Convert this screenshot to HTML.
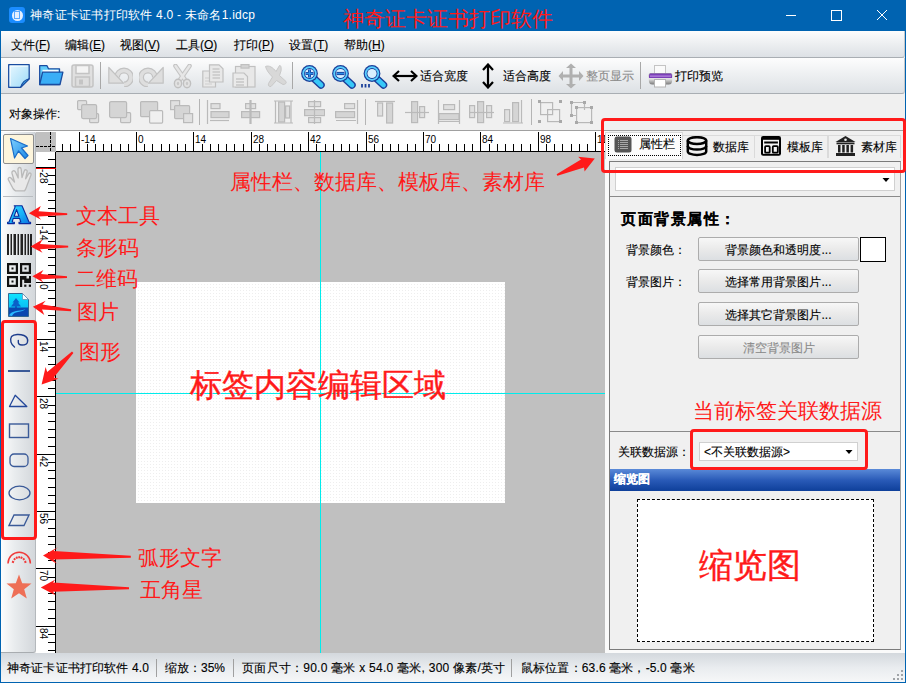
<!DOCTYPE html>
<html><head><meta charset="utf-8">
<style>
*{box-sizing:border-box}
html,body{margin:0;padding:0}
body{width:906px;height:683px;overflow:hidden;position:relative;background:#f0f0f0;font-family:"Liberation Sans",sans-serif;font-size:12px;color:#000}
.a{position:absolute}
.t{position:absolute;white-space:nowrap;line-height:14px;-webkit-text-stroke:0.12px currentColor}
.red{position:absolute;white-space:nowrap;color:#ff1a1a;font-size:21px;line-height:24px;font-weight:300}
.bar{background:linear-gradient(#fdfdfd,#eef0f2 45%,#dde1e5);border-bottom:1px solid #a9aeb3}
.sep{position:absolute;width:1px;background:#a0a0a0}
.btn{position:absolute;left:698px;width:161px;height:24px;border:1px solid #acacac;border-radius:2px;background:linear-gradient(#f7f7f7,#eaeaea 50%,#dcdfe2);text-align:center;line-height:24px;-webkit-text-stroke:0.12px currentColor}
</style></head><body>

<!-- title bar -->
<div class="a" style="left:0;top:0;width:906px;height:31px;background:#0063b1"></div>
<div class="a" style="left:0;top:0;width:1px;height:683px;background:#0063b1"></div>
<div class="a" style="left:905px;top:0;width:1px;height:683px;background:#0063b1"></div>
<div class="a" style="left:0;top:682px;width:906px;height:1px;background:#0063b1"></div>
<div class="a" style="left:9px;top:7px;width:16px;height:16px;border-radius:3px;background:#1a8cff"></div>
<div class="a" style="left:11.5px;top:9.5px;width:11px;height:11px;border-radius:50%;background:#e6f0ff"></div>
<div class="a" style="left:14px;top:11px;width:6px;height:8px;border:1px solid #5aa8ff"></div>
<div class="t" style="left:30px;top:8px;color:#fff;letter-spacing:0.25px;-webkit-text-stroke:0">神奇证卡证书打印软件 4.0 - 未命名1.idcp</div>
<svg class="a" style="left:780px;top:0" width="120" height="31" stroke="#fff" stroke-width="1" fill="none" shape-rendering="crispEdges">
<line x1="6" y1="15.5" x2="16" y2="15.5"/>
<rect x="51.5" y="10.5" width="10" height="10"/>
<path d="M97 10 L107 20 M107 10 L97 20" shape-rendering="geometricPrecision"/>
</svg>

<!-- menu bar -->
<div class="a bar" style="left:1px;top:31px;width:904px;height:27px;border-right:1px solid #c4c8cc;border-radius:0 0 3px 0"></div>
<div class="t" style="left:11px;top:38px">文件(<u>F</u>)</div>
<div class="t" style="left:65px;top:38px">编辑(<u>E</u>)</div>
<div class="t" style="left:120px;top:38px">视图(<u>V</u>)</div>
<div class="t" style="left:176px;top:38px">工具(<u>O</u>)</div>
<div class="t" style="left:234px;top:38px">打印(<u>P</u>)</div>
<div class="t" style="left:289px;top:38px">设置(<u>T</u>)</div>
<div class="t" style="left:344px;top:38px">帮助(<u>H</u>)</div>

<!-- toolbar -->
<div class="a bar" style="left:1px;top:58px;width:904px;height:36px;border-right:1px solid #c4c8cc;border-radius:0 0 3px 0"></div>

<!-- new -->
<svg class="a" style="left:8px;top:64px" width="23" height="24">
<defs><linearGradient id="gnew" x1="0" y1="0" x2="1" y2="1"><stop offset="0" stop-color="#e8f8ff"/><stop offset="1" stop-color="#9cdaf8"/></linearGradient></defs>
<path d="M0.7 0.7 H21.2 V14.8 L12.6 23.3 H0.7 Z" fill="url(#gnew)" stroke="#1a4ca0" stroke-width="1.3" stroke-linejoin="round"/>
<path d="M2.2 2.2 V21.8 M2.2 2.2 H19.8" stroke="#fff" stroke-width="1" opacity="0.8"/>
<path d="M21.2 14.8 L12.6 23.3 C13.8 19.5 15.5 16.2 21.2 14.8 Z" fill="#40b8f4" stroke="#1a4ca0" stroke-width="1.1" stroke-linejoin="round"/>
</svg>
<!-- open -->
<svg class="a" style="left:39px;top:65px" width="25" height="21">
<path d="M0.7 0.7 H8 L9.5 3.8 H20.5 V19.5 H0.7 Z" fill="#62ccfa" stroke="#1a4ca0" stroke-width="1.3" stroke-linejoin="round"/>
<rect x="3.5" y="4.8" width="16" height="2.5" fill="#f4fbff"/>
<path d="M0.7 19.5 L3.6 7.2 H23.9 L21 19.5 Z" fill="#3aaef6" stroke="#1a4ca0" stroke-width="1.3" stroke-linejoin="round"/>
</svg>
<!-- save (disabled) -->
<svg class="a" style="left:71px;top:64px" width="23" height="24" fill="none" stroke="#c4c4c4" stroke-width="1.5">
<rect x="1" y="1" width="21" height="22" rx="2" fill="#e0e0e0"/>
<rect x="5" y="1.5" width="13" height="8" fill="#f4f4f4"/>
<rect x="4.5" y="13" width="14" height="9.5" fill="#dedede"/>
<rect x="8" y="15.5" width="4" height="5" fill="#c4c4c4" stroke="none"/>
</svg>
<div class="sep" style="left:100px;top:62px;height:27px;background:#a8a8a8"></div>
<!-- undo -->
<svg class="a" style="left:108px;top:66px" width="25" height="21"><path d="M9 11.5 A7 7 0 1 1 16 18.5" fill="none" stroke="#c2c2c2" stroke-width="6"/>
<path d="M9 11.5 A7 7 0 1 1 16 18.5" fill="none" stroke="#dedede" stroke-width="3.6"/>
<path d="M0.8 1.5 V17.2 H15.5 Z" fill="#dedede" stroke="#c2c2c2" stroke-width="1.2" stroke-linejoin="round"/></svg>
<!-- redo -->
<svg class="a" style="left:139px;top:66px" width="25" height="21"><g transform="translate(25,0) scale(-1,1)"><path d="M9 11.5 A7 7 0 1 1 16 18.5" fill="none" stroke="#c2c2c2" stroke-width="6"/>
<path d="M9 11.5 A7 7 0 1 1 16 18.5" fill="none" stroke="#dedede" stroke-width="3.6"/>
<path d="M0.8 1.5 V17.2 H15.5 Z" fill="#dedede" stroke="#c2c2c2" stroke-width="1.2" stroke-linejoin="round"/></g></svg>
<!-- cut -->
<svg class="a" style="left:172px;top:64px" width="21" height="25" fill="none" stroke-linecap="round">
<path d="M3.5 2 L12.5 15 M17.5 2 L8.5 15" stroke="#c4c4c4" stroke-width="4.6"/>
<path d="M3.5 2 L12.5 15 M17.5 2 L8.5 15" stroke="#e6e6e6" stroke-width="2.4"/>
<ellipse cx="6" cy="19.5" rx="3.6" ry="4.2" fill="#e2e2e2" stroke="#c0c0c0" stroke-width="1.4"/>
<ellipse cx="15" cy="19.5" rx="3.6" ry="4.2" fill="#e2e2e2" stroke="#c0c0c0" stroke-width="1.4"/>
<ellipse cx="6" cy="19.5" rx="1.2" ry="1.8" fill="#c8c8c8"/>
<ellipse cx="15" cy="19.5" rx="1.2" ry="1.8" fill="#c8c8c8"/>
</svg>
<!-- copy -->
<svg class="a" style="left:202px;top:64px" width="22" height="24" fill="#e8e8e8" stroke="#c0c0c0" stroke-width="1.2">
<path d="M0.8 7 H10 L13.5 10.5 V23 H0.8 Z"/>
<path d="M3 14 H10 M3 17 H10 M3 20 H10" stroke="#cdcdcd" fill="none"/>
<path d="M7.5 0.8 H17 L21 4.8 V18 H7.5 Z"/>
<path d="M10.5 5 H17.5 M10.5 8 H18 M10.5 11 H18 M10.5 14 H18" stroke="#c8c8c8" fill="none" stroke-width="1.3"/>
</svg>
<!-- paste -->
<svg class="a" style="left:232px;top:64px" width="25" height="24" fill="#e8e8e8" stroke="#c0c0c0" stroke-width="1.2">
<rect x="3.5" y="2.5" width="19.5" height="20.5"/>
<rect x="9" y="0.6" width="8" height="3.5" fill="#d4d4d4"/>
<path d="M1 9 H12 L15.5 12.5 V23 H1 Z" fill="#eaeaea"/>
<path d="M4 15 H12 M4 18 H12 M4 21 H12" fill="none" stroke="#c6c6c6" stroke-width="1.4"/>
</svg>
<!-- delete -->
<svg class="a" style="left:264px;top:64px" width="24" height="25">
<path d="M1.5 2.5 C5 1 9 3.5 12 7.5 L15.5 1.5 C17 1.2 17.5 4 17 7 L15.5 11.5 L22 17.5 C22.8 19 21.5 20.5 19 20.5 L12.5 16.5 L7 22.5 C5 23 4 21.5 4.5 19.5 L8.5 13 C5.5 10 2.5 6.5 1.5 2.5 Z" fill="#d8d8d8" stroke="#c8c8c8" stroke-width="1"/>
</svg>
<div class="sep" style="left:292px;top:62px;height:27px;background:#a8a8a8"></div>
<!-- zoom in -->
<svg class="a" style="left:300px;top:64px" width="25" height="25">
<path d="M14.5 15 L21.0 21" stroke="#1a3f9a" stroke-width="7.5" stroke-linecap="round"/>
<path d="M14.5 15 L21.0 21" stroke="#38c8f8" stroke-width="4.8" stroke-linecap="round"/>
<circle cx="9.5" cy="9.5" r="8.4" fill="#1a3f9a"/>
<circle cx="9.5" cy="9.5" r="7.2" fill="#5ad0ff"/>
<circle cx="9.5" cy="9.5" r="5.4" fill="#1a3f9a"/>
<circle cx="9.5" cy="9.5" r="4.6" fill="#d8f0ff"/>
<path d="M5.5 9.5 H13.5 M9.5 5.5 V13.5" stroke="#1a3f9a" stroke-width="3"/><path d="M6 9.5 H13 M9.5 6 V13" stroke="#2a90e8" stroke-width="1.4"/>
</svg>
<!-- zoom out -->
<svg class="a" style="left:331px;top:64px" width="25" height="25">
<path d="M14.5 15 L21.0 21" stroke="#1a3f9a" stroke-width="7.5" stroke-linecap="round"/>
<path d="M14.5 15 L21.0 21" stroke="#38c8f8" stroke-width="4.8" stroke-linecap="round"/>
<circle cx="9.5" cy="9.5" r="8.4" fill="#1a3f9a"/>
<circle cx="9.5" cy="9.5" r="7.2" fill="#5ad0ff"/>
<circle cx="9.5" cy="9.5" r="5.4" fill="#1a3f9a"/>
<circle cx="9.5" cy="9.5" r="4.6" fill="#d8f0ff"/>
<path d="M5.5 9.5 H13.5" stroke="#1a3f9a" stroke-width="3.2"/><path d="M6 9.5 H13" stroke="#2a90e8" stroke-width="1.4"/>
</svg>
<!-- zoom fit -->
<svg class="a" style="left:361px;top:64px" width="27" height="25">
<path d="M16 15 L22.5 21" stroke="#1a3f9a" stroke-width="7.5" stroke-linecap="round"/>
<path d="M16 15 L22.5 21" stroke="#38c8f8" stroke-width="4.8" stroke-linecap="round"/>
<circle cx="11" cy="9.5" r="8.4" fill="#1a3f9a"/>
<circle cx="11" cy="9.5" r="7.2" fill="#5ad0ff"/>
<circle cx="11" cy="9.5" r="5.4" fill="#1a3f9a"/>
<circle cx="11" cy="9.5" r="4.6" fill="#d8f0ff"/>
<path d="M1 20 V23.5 M4.5 20 V23.5 M8 20 V23.5" stroke="#1a3f9a" stroke-width="1.8"/>
</svg>
<svg class="a" style="left:392px;top:70px" width="26" height="12">
<path d="M2 6 H24" stroke="#000" stroke-width="2.2"/>
<path d="M7 1 L1.5 6 L7 11 M19 1 L24.5 6 L19 11" fill="none" stroke="#000" stroke-width="2.2"/>
</svg>
<div class="t" style="left:420px;top:69px">适合宽度</div>
<svg class="a" style="left:482px;top:63px" width="12" height="26">
<path d="M6 2 V24" stroke="#000" stroke-width="2.2"/>
<path d="M1 7 L6 1.5 L11 7 M1 19 L6 24.5 L11 19" fill="none" stroke="#000" stroke-width="2.2"/>
</svg>
<div class="t" style="left:503px;top:69px">适合高度</div>
<svg class="a" style="left:558px;top:63px" width="26" height="26" fill="#b0b0b0">
<path d="M11.5 5 H14.5 V11.5 H21 V8 L25.5 13 L21 18 V14.5 H14.5 V21 H18 L13 25.5 L8 21 H11.5 V14.5 H5 V18 L0.5 13 L5 8 V11.5 H11.5 V5 H8 L13 0.5 L18 5 Z"/>
</svg>
<div class="t" style="left:586px;top:69px;color:#8c8c8c">整页显示</div>
<div class="sep" style="left:640px;top:62px;height:27px;background:#a8a8a8"></div>
<!-- printer -->
<svg class="a" style="left:648px;top:65px" width="25" height="23">
<defs><linearGradient id="gpr" x1="0" y1="0" x2="0" y2="1"><stop offset="0" stop-color="#9a9a9a"/><stop offset="0.5" stop-color="#e6e6e6"/><stop offset="1" stop-color="#7a7a7a"/></linearGradient></defs>
<rect x="6.5" y="0.5" width="11" height="9" fill="#fafafa" stroke="#c4c4c4"/>
<path d="M3 8 H22 Q24.5 8 24.5 11 L24 17 Q23.5 19.5 21 19.5 H4 Q1.5 19.5 1 17 L0.5 11 Q0.5 8 3 8 Z" fill="url(#gpr)"/>
<path d="M2 8.5 H23 Q24 9 24 11 V13 H1 V11 Q1 9 2 8.5 Z" fill="#7b3fb8"/>
<rect x="2" y="10.5" width="21" height="1.2" fill="#b88ae0"/>
<rect x="6.5" y="14.5" width="11" height="7.5" fill="#fff" stroke="#b4b4b4"/>
</svg>
<div class="t" style="left:675px;top:69px">打印预览</div>


<!-- object bar -->
<div class="a" style="left:1px;top:130px;width:904px;height:1px;background:#a0a0a0"></div>
<div class="t" style="left:9px;top:107px">对象操作:</div>

<svg class="a" style="left:77px;top:100px" width="25" height="24" stroke="#bababa" stroke-width="1.2">
<rect x="0.6" y="0.6" width="9" height="9" rx="1" fill="#e0e0e0"/>
<rect x="12.6" y="13.6" width="9" height="9" rx="1" fill="#e0e0e0"/>
<rect x="4.6" y="4.6" width="15" height="14" rx="1.5" fill="#d5d5d5"/>
</svg>
<svg class="a" style="left:108px;top:100px" width="25" height="24" stroke="#bababa" stroke-width="1.2">
<rect x="12.6" y="12.6" width="10" height="10" rx="1" fill="#e0e0e0"/>
<rect x="1.6" y="1.6" width="17" height="16" rx="1.5" fill="#d5d5d5"/>
</svg>
<svg class="a" style="left:139px;top:100px" width="25" height="24" stroke="#bababa" stroke-width="1.2">
<rect x="1.6" y="1.6" width="17" height="15" rx="1" fill="#d5d5d5"/>
<rect x="10.6" y="10.6" width="13" height="12.5" rx="1" fill="#f0f0f0"/>
</svg>
<svg class="a" style="left:170px;top:100px" width="25" height="24" stroke="#bababa" stroke-width="1.2">
<rect x="0.6" y="0.6" width="9" height="9" fill="#e0e0e0"/>
<rect x="4.6" y="5.6" width="15" height="13" rx="1" fill="#d5d5d5"/>
<rect x="13.6" y="13.6" width="9" height="9" fill="#e0e0e0"/>
</svg>
<div class="sep" style="left:199px;top:99px;height:26px;background:#b4b4b4"></div>
<svg class="a" style="left:206px;top:100px" width="25" height="24" stroke="#bababa" stroke-width="1.2">
<path d="M1.5 0 V24" />
<rect x="5" y="3.6" width="9" height="5" fill="#e0e0e0"/>
<rect x="5" y="11.6" width="18" height="6" fill="#d5d5d5"/>
<path d="M4 20.5 H23" />
</svg>
<svg class="a" style="left:240px;top:100px" width="22" height="24" stroke="#bababa" stroke-width="1.2">
<rect x="5.6" y="3.6" width="10" height="5" fill="#e0e0e0"/>
<rect x="1.6" y="11.6" width="18" height="6" fill="#d5d5d5"/>
<path d="M10.5 0 V24" stroke-width="2.2"/>
</svg>
<svg class="a" style="left:273px;top:100px" width="21" height="24" stroke="#bababa" stroke-width="1.2">
<path d="M1 1 H20 M1 23 H20 M2.5 1 V23 M18 1 V23" />
<rect x="5.6" y="2" width="6" height="20" fill="#d5d5d5"/>
<rect x="12.6" y="6" width="4" height="12" fill="#e0e0e0"/>
</svg>
<svg class="a" style="left:304px;top:100px" width="21" height="24" stroke="#bababa" stroke-width="1.2">
<rect x="4.6" y="1.6" width="12" height="5" fill="#e0e0e0"/>
<rect x="0.6" y="9.6" width="20" height="6" fill="#d5d5d5"/>
<rect x="4.6" y="17.6" width="12" height="5" fill="#e0e0e0"/>
<path d="M10.5 0 V24"/>
</svg>
<svg class="a" style="left:335px;top:100px" width="24" height="24" stroke="#bababa" stroke-width="1.2">
<rect x="9.6" y="3.6" width="10" height="5" fill="#e0e0e0"/>
<rect x="0.6" y="11.6" width="19" height="6" fill="#d5d5d5"/>
<path d="M22.5 0 V24 M1 20.5 H21"/>
</svg>
<div class="sep" style="left:365px;top:99px;height:26px;background:#b4b4b4"></div>
<svg class="a" style="left:375px;top:100px" width="20" height="24" stroke="#bababa" stroke-width="1.2">
<path d="M0 1.5 H20"/>
<rect x="2.6" y="3" width="5" height="13" fill="#e0e0e0"/>
<rect x="11.6" y="3" width="6" height="20" fill="#d5d5d5"/>
</svg>
<svg class="a" style="left:405px;top:100px" width="24" height="24" stroke="#bababa" stroke-width="1.2">
<rect x="6.6" y="1.6" width="6" height="21" fill="#d5d5d5"/>
<rect x="14.6" y="6.6" width="5" height="11" fill="#e0e0e0"/>
<path d="M0 12.5 H24"/>
</svg>
<svg class="a" style="left:437px;top:100px" width="24" height="24" stroke="#bababa" stroke-width="1.2">
<path d="M1.5 0 V24 M22.5 0 V24 M1 21.5 H23"/>
<rect x="6.6" y="4.6" width="11" height="5" fill="#e0e0e0"/>
<rect x="2" y="13.6" width="20" height="6" fill="#d5d5d5"/>
</svg>
<svg class="a" style="left:469px;top:100px" width="25" height="24" stroke="#bababa" stroke-width="1.2">
<rect x="0.6" y="5.6" width="5" height="12" fill="#e0e0e0"/>
<rect x="8.6" y="1.6" width="6" height="21" fill="#d5d5d5"/>
<rect x="17.6" y="5.6" width="5" height="12" fill="#e0e0e0"/>
<path d="M0 12.5 H25"/>
</svg>
<svg class="a" style="left:503px;top:100px" width="20" height="24" stroke="#bababa" stroke-width="1.2">
<rect x="1.6" y="9.6" width="5" height="12" fill="#e0e0e0"/>
<rect x="9.6" y="2.6" width="6" height="19" fill="#d5d5d5"/>
<path d="M0 23 H20 M18.5 0 V23"/>
</svg>
<div class="sep" style="left:531px;top:99px;height:26px;background:#b4b4b4"></div>
<svg class="a" style="left:538px;top:100px" width="26" height="24" fill="none" stroke="#b8b8b8" stroke-width="1.2">
<rect x="2.6" y="2.6" width="12" height="12"/>
<rect x="9.6" y="9.6" width="12" height="12"/>
<g fill="#a8a8a8" stroke="none"><rect x="0" y="0" width="3" height="3"/><rect x="21" y="0" width="3" height="3"/><rect x="0" y="20" width="3" height="3"/><rect x="21" y="20" width="3" height="3"/></g>
</svg>
<svg class="a" style="left:569px;top:100px" width="26" height="24" fill="none" stroke="#b8b8b8" stroke-width="1.2">
<path d="M2.5 2.5 H15.5 V10 M2.5 2.5 V15.5 H8"/>
<rect x="7.6" y="7.6" width="15" height="15"/>
<g fill="#a8a8a8" stroke="none"><rect x="1" y="1" width="3" height="3"/><rect x="14" y="1" width="3" height="3"/><rect x="1" y="14" width="3" height="3"/><rect x="6" y="6" width="3" height="3"/><rect x="21" y="6" width="3" height="3"/><rect x="6" y="21" width="3" height="3"/><rect x="21" y="21" width="3" height="3"/></g>
</svg>


<!-- left tool panel -->
<div class="a" style="left:1px;top:131px;width:604px;height:1px;background:#fff"></div><div class="a" style="left:1px;top:132px;width:35px;height:521px;background:linear-gradient(90deg,#fdfdfd,#e9ecee 40%,#d3d7db);border-right:1px solid #b4b8bc;border-bottom:1px solid #a8acb0;border-radius:2px 2px 3px 0"></div>
<div class="a" style="left:3px;top:134px;width:31px;height:30px;background:#fdf5dc;border:1px solid #8e8e8e;border-radius:2px"></div>
<div class="a" style="left:3px;top:196px;width:30px;height:1px;background:#b8bcc0"></div>

<!-- select arrow -->
<svg class="a" style="left:9px;top:137px" width="22" height="24">
<defs><linearGradient id="garr" x1="0" y1="0" x2="1" y2="1"><stop offset="0" stop-color="#7fd0ff"/><stop offset="1" stop-color="#1c8ae6"/></linearGradient></defs>
<path d="M1.5 1.5 L18.5 9 L12.5 11 L19 18.5 L16 21.5 L9.5 14 L5.5 21 Z" fill="url(#garr)" stroke="#1a6cc8" stroke-width="1.2" stroke-linejoin="round"/>
</svg>
<!-- hand -->
<svg class="a" style="left:7px;top:166px" width="25" height="26">
<path d="M6 22.5 L1.5 14 C0.6 12 2.5 10.6 4 12 L7.5 16 L5 7.2 C4.5 4.6 7.5 4 8.5 6 L11.2 12 L11 3.2 C11 0.9 14 0.9 14.2 3.2 L15 11.5 L17.2 5 C17.8 3 20.6 3.6 20.1 5.8 L18.6 12.8 L21.6 7.8 C22.6 6.2 24.6 7.2 23.9 9.2 L20.2 19 C19.2 22 18.6 23.8 17.6 24.8 H8.6 C7.6 24.3 6.8 23.6 6 22.5 Z" fill="#e9e9e9" stroke="#b9b9b9" stroke-width="1.3" stroke-linejoin="round"/>
</svg>
<!-- A -->
<svg class="a" style="left:7px;top:205px" width="25" height="20">
<defs><linearGradient id="gA" x1="0" y1="0" x2="1" y2="1"><stop offset="0" stop-color="#30dcff"/><stop offset="0.55" stop-color="#18b0f8"/><stop offset="1" stop-color="#0a70e0"/></linearGradient></defs>
<path d="M0.6 18.6 V17.3 L2 17 L8.2 1.6 L7.2 0.8 H15 L22 17 L23.6 17.3 V18.6 H12 V17.3 L13.8 17 L12.6 13.4 H6.2 L5.2 17 L7.4 17.3 V18.6 Z M7.1 11.2 H11.9 L9.6 4.6 Z" fill="url(#gA)" stroke="#0a2a9c" stroke-width="1.1" fill-rule="evenodd" stroke-linejoin="round"/>
</svg>
<!-- barcode -->
<svg class="a" style="left:7px;top:234px" width="25" height="21" fill="#222">
<rect x="0" y="0" width="2" height="21"/><rect x="3.5" y="0" width="1.5" height="21"/><rect x="6.5" y="0" width="2.5" height="21"/>
<rect x="10.5" y="0" width="1.5" height="21"/><rect x="13.5" y="0" width="2.5" height="21"/><rect x="17.5" y="0" width="1.5" height="21"/>
<rect x="20.5" y="0" width="1.5" height="21"/><rect x="23" y="0" width="2" height="21"/>
</svg>
<!-- QR -->
<svg class="a" style="left:7px;top:263px" width="24" height="24" fill="#111">
<path d="M0 0 H11 V11 H0 Z M2.2 2.2 V8.8 H8.8 V2.2 Z" fill-rule="evenodd"/><rect x="4.5" y="4.5" width="2" height="2"/>
<path d="M13 0 H24 V11 H13 Z M15.2 2.2 V8.8 H21.8 V2.2 Z" fill-rule="evenodd"/><rect x="17.5" y="4.5" width="2" height="2"/>
<path d="M0 13 H11 V24 H0 Z M2.2 15.2 V21.8 H8.8 V15.2 Z" fill-rule="evenodd"/><rect x="4.5" y="17.5" width="2" height="2"/>
<path d="M13 13 H19.5 V15.5 H22 V13 H24 V20 H17.2 V16.8 H15.2 V24 H13 Z"/>
<rect x="17.2" y="21.6" width="2.2" height="2.2"/><rect x="21.8" y="21.6" width="2.2" height="2.2"/>
</svg>
<!-- picture -->
<svg class="a" style="left:8px;top:293px" width="22" height="25">
<defs><linearGradient id="gP" x1="0" y1="0" x2="0" y2="1"><stop offset="0" stop-color="#12e4ff"/><stop offset="0.6" stop-color="#08c0f4"/></linearGradient></defs>
<path d="M0.5 0.5 H14.5 L20.5 6.5 V23.5 H0.5 Z" fill="url(#gP)" stroke="#2a5a88" stroke-width="0.9"/>
<path d="M14.5 0.5 V6.5 H20.5 Z" fill="#f8fcff" stroke="#5a8ab0" stroke-width="0.7"/>
<path d="M8 5 L4.5 9.5 H6 L3 13.5 H7 V15 H9 V13.5 H13 L10 9.5 H11.5 Z" fill="#0a60c8"/>
<path d="M1 14.5 H20 V23 H1 Z" fill="#0a48b0"/>
<path d="M1 22.5 C3 19 6 18 12 17.5 C15 17.2 17 16.5 18 15.5 C16 17.8 13 18.6 10 19 C7 19.5 5 20.5 4 23 Z" fill="#28b8ff"/>
</svg>
<!-- shapes -->
<svg class="a" style="left:8px;top:332px" width="24" height="17" fill="none" stroke="#3a5a98" stroke-width="1.2" stroke-linecap="round">
<path d="M6.5 15 C3 12.5 1.5 8 3.5 4.5 C6 2 12 2 16 3.5 C19.5 4.8 20 7 19.5 10 C19.2 12.5 17 13 14 13 C11 13 10 12 10.3 8.5" stroke="#1c3c8c" stroke-width="1.4"/>
</svg>
<svg class="a" style="left:8px;top:369px" width="22" height="4"><rect x="0" y="1" width="22" height="2" fill="#3a5a98"/></svg>
<svg class="a" style="left:8px;top:388px" width="21" height="21" fill="none" stroke="#3a5a98" stroke-width="1.4">
<path d="M7.2 7.3 L18.8 18.5 H1.5 Z" stroke-linejoin="round" stroke="#24489a" stroke-width="1.3"/>
</svg>
<svg class="a" style="left:8px;top:423px" width="22" height="16" fill="none" stroke="#3a5a98" stroke-width="1.4">
<rect x="1.5" y="1" width="19" height="13.5"/>
</svg>
<svg class="a" style="left:9px;top:453px" width="20" height="15" fill="none" stroke="#3a5a98" stroke-width="1.3">
<rect x="1" y="1" width="18" height="12.5" rx="4"/>
</svg>
<svg class="a" style="left:8px;top:485px" width="23" height="16" fill="none" stroke="#3a5a98" stroke-width="1.3">
<ellipse cx="11.5" cy="8" rx="10.5" ry="6.8"/>
</svg>
<svg class="a" style="left:8px;top:514px" width="22" height="13" fill="none" stroke="#3a5a98" stroke-width="1.3">
<path d="M6 1 H21 L16 11.5 H1 Z"/>
</svg>
<!-- arc text -->
<svg class="a" style="left:6px;top:549px" width="26" height="16" fill="none" stroke="#f03a3a">
<path d="M2 14.5 A11.2 11.2 0 0 1 24.4 14.5" stroke-width="1.5"/>
<path d="M6 12.5 L8 13.3 M7.8 9.5 L9.4 10.8 M10.3 7.8 L11.3 9.6 M13.2 7.3 V9.3 M16 7.8 L15 9.6 M18.5 9.5 L17 10.8 M20.3 12.5 L18.4 13.3" stroke-width="1.9"/>
</svg>
<!-- star -->
<svg class="a" style="left:6px;top:574px" width="26" height="26">
<path d="M13 0.5 L16.2 9.2 L25.5 9.5 L18.2 15.3 L20.8 24.5 L13 19.2 L5.2 24.5 L7.8 15.3 L0.5 9.5 L9.8 9.2 Z" fill="#ee6f56"/>
</svg>


<!-- ruler corner -->
<svg class="a" style="left:36px;top:132px" width="20" height="20" shape-rendering="crispEdges"><rect width="20" height="20" fill="#c0c0c0"/><path d="M14.5 0 V20" stroke="#000" stroke-dasharray="3,1"/><path d="M0 14.5 H20" stroke="#000" stroke-dasharray="3,1"/></svg>
<svg width="549" height="21" style="position:absolute;left:56px;top:131px;background:#fff" stroke="#000" stroke-width="1" font-family="Liberation Sans" font-size="10" shape-rendering="crispEdges"><line x1="0" y1="20.5" x2="549" y2="20.5"/><line x1="6.5" y1="13" x2="6.5" y2="21" /><line x1="14.5" y1="13" x2="14.5" y2="21" /><line x1="23.5" y1="1" x2="23.5" y2="21" /><text x="25.0" y="11.5" stroke="none">-14</text><line x1="31.5" y1="13" x2="31.5" y2="21" /><line x1="39.5" y1="13" x2="39.5" y2="21" /><line x1="47.5" y1="13" x2="47.5" y2="21" /><line x1="55.5" y1="13" x2="55.5" y2="21" /><line x1="64.5" y1="13" x2="64.5" y2="21" /><line x1="72.5" y1="13" x2="72.5" y2="21" /><line x1="80.5" y1="1" x2="80.5" y2="21" /><text x="82.0" y="11.5" stroke="none">0</text><line x1="88.5" y1="13" x2="88.5" y2="21" /><line x1="96.5" y1="13" x2="96.5" y2="21" /><line x1="105.5" y1="13" x2="105.5" y2="21" /><line x1="113.5" y1="13" x2="113.5" y2="21" /><line x1="121.5" y1="13" x2="121.5" y2="21" /><line x1="129.5" y1="13" x2="129.5" y2="21" /><line x1="137.5" y1="1" x2="137.5" y2="21" /><text x="139.0" y="11.5" stroke="none">14</text><line x1="146.5" y1="13" x2="146.5" y2="21" /><line x1="154.5" y1="13" x2="154.5" y2="21" /><line x1="162.5" y1="13" x2="162.5" y2="21" /><line x1="170.5" y1="13" x2="170.5" y2="21" /><line x1="178.5" y1="13" x2="178.5" y2="21" /><line x1="187.5" y1="13" x2="187.5" y2="21" /><line x1="195.5" y1="1" x2="195.5" y2="21" /><text x="197.0" y="11.5" stroke="none">28</text><line x1="203.5" y1="13" x2="203.5" y2="21" /><line x1="211.5" y1="13" x2="211.5" y2="21" /><line x1="219.5" y1="13" x2="219.5" y2="21" /><line x1="228.5" y1="13" x2="228.5" y2="21" /><line x1="236.5" y1="13" x2="236.5" y2="21" /><line x1="244.5" y1="13" x2="244.5" y2="21" /><line x1="252.5" y1="1" x2="252.5" y2="21" /><text x="254.0" y="11.5" stroke="none">42</text><line x1="260.5" y1="13" x2="260.5" y2="21" /><line x1="269.5" y1="13" x2="269.5" y2="21" /><line x1="277.5" y1="13" x2="277.5" y2="21" /><line x1="285.5" y1="13" x2="285.5" y2="21" /><line x1="293.5" y1="13" x2="293.5" y2="21" /><line x1="301.5" y1="13" x2="301.5" y2="21" /><line x1="310.5" y1="1" x2="310.5" y2="21" /><text x="312.0" y="11.5" stroke="none">56</text><line x1="318.5" y1="13" x2="318.5" y2="21" /><line x1="326.5" y1="13" x2="326.5" y2="21" /><line x1="334.5" y1="13" x2="334.5" y2="21" /><line x1="342.5" y1="13" x2="342.5" y2="21" /><line x1="351.5" y1="13" x2="351.5" y2="21" /><line x1="359.5" y1="13" x2="359.5" y2="21" /><line x1="367.5" y1="1" x2="367.5" y2="21" /><text x="369.0" y="11.5" stroke="none">70</text><line x1="375.5" y1="13" x2="375.5" y2="21" /><line x1="383.5" y1="13" x2="383.5" y2="21" /><line x1="392.5" y1="13" x2="392.5" y2="21" /><line x1="400.5" y1="13" x2="400.5" y2="21" /><line x1="408.5" y1="13" x2="408.5" y2="21" /><line x1="416.5" y1="13" x2="416.5" y2="21" /><line x1="424.5" y1="1" x2="424.5" y2="21" /><text x="426.0" y="11.5" stroke="none">84</text><line x1="433.5" y1="13" x2="433.5" y2="21" /><line x1="441.5" y1="13" x2="441.5" y2="21" /><line x1="449.5" y1="13" x2="449.5" y2="21" /><line x1="457.5" y1="13" x2="457.5" y2="21" /><line x1="465.5" y1="13" x2="465.5" y2="21" /><line x1="474.5" y1="13" x2="474.5" y2="21" /><line x1="482.5" y1="1" x2="482.5" y2="21" /><text x="484.0" y="11.5" stroke="none">98</text><line x1="490.5" y1="13" x2="490.5" y2="21" /><line x1="498.5" y1="13" x2="498.5" y2="21" /><line x1="506.5" y1="13" x2="506.5" y2="21" /><line x1="515.5" y1="13" x2="515.5" y2="21" /><line x1="523.5" y1="13" x2="523.5" y2="21" /><line x1="531.5" y1="13" x2="531.5" y2="21" /><line x1="539.5" y1="1" x2="539.5" y2="21" /><text x="541.0" y="11.5" stroke="none">112</text><line x1="547.5" y1="13" x2="547.5" y2="21" /></svg>
<div class="a" style="left:36px;top:152px;width:20px;height:501px;background:#fff"></div>
<svg width="20" height="501" style="position:absolute;left:36px;top:152px" stroke="#000" stroke-width="1" font-family="Liberation Sans" font-size="10" shape-rendering="crispEdges"><line x1="19.5" y1="0" x2="19.5" y2="501"/><line x1="12" y1="7.5" x2="20" y2="7.5" /><line x1="0" y1="15.5" x2="20" y2="15.5"/><line x1="0" y1="16.5" x2="20" y2="16.5" stroke="#ff0000"/><text transform="translate(4,17.0) rotate(90)" x="0" y="0" stroke="none">-28</text><line x1="12" y1="23.5" x2="20" y2="23.5" /><line x1="12" y1="32.5" x2="20" y2="32.5" /><line x1="12" y1="40.5" x2="20" y2="40.5" /><line x1="12" y1="48.5" x2="20" y2="48.5" /><line x1="12" y1="56.5" x2="20" y2="56.5" /><line x1="12" y1="64.5" x2="20" y2="64.5" /><line x1="0" y1="72.5" x2="20" y2="72.5"/><text transform="translate(4,74.0) rotate(90)" x="0" y="0" stroke="none">-14</text><line x1="12" y1="81.5" x2="20" y2="81.5" /><line x1="12" y1="89.5" x2="20" y2="89.5" /><line x1="12" y1="97.5" x2="20" y2="97.5" /><line x1="12" y1="105.5" x2="20" y2="105.5" /><line x1="12" y1="113.5" x2="20" y2="113.5" /><line x1="12" y1="122.5" x2="20" y2="122.5" /><line x1="0" y1="130.5" x2="20" y2="130.5"/><text transform="translate(4,132.0) rotate(90)" x="0" y="0" stroke="none">0</text><line x1="12" y1="138.5" x2="20" y2="138.5" /><line x1="12" y1="146.5" x2="20" y2="146.5" /><line x1="12" y1="154.5" x2="20" y2="154.5" /><line x1="12" y1="163.5" x2="20" y2="163.5" /><line x1="12" y1="171.5" x2="20" y2="171.5" /><line x1="12" y1="179.5" x2="20" y2="179.5" /><line x1="0" y1="187.5" x2="20" y2="187.5"/><text transform="translate(4,189.0) rotate(90)" x="0" y="0" stroke="none">14</text><line x1="12" y1="195.5" x2="20" y2="195.5" /><line x1="12" y1="204.5" x2="20" y2="204.5" /><line x1="12" y1="212.5" x2="20" y2="212.5" /><line x1="12" y1="220.5" x2="20" y2="220.5" /><line x1="12" y1="228.5" x2="20" y2="228.5" /><line x1="12" y1="236.5" x2="20" y2="236.5" /><line x1="0" y1="244.5" x2="20" y2="244.5"/><text transform="translate(4,246.0) rotate(90)" x="0" y="0" stroke="none">28</text><line x1="12" y1="253.5" x2="20" y2="253.5" /><line x1="12" y1="261.5" x2="20" y2="261.5" /><line x1="12" y1="269.5" x2="20" y2="269.5" /><line x1="12" y1="277.5" x2="20" y2="277.5" /><line x1="12" y1="285.5" x2="20" y2="285.5" /><line x1="12" y1="294.5" x2="20" y2="294.5" /><line x1="0" y1="302.5" x2="20" y2="302.5"/><text transform="translate(4,304.0) rotate(90)" x="0" y="0" stroke="none">42</text><line x1="12" y1="310.5" x2="20" y2="310.5" /><line x1="12" y1="318.5" x2="20" y2="318.5" /><line x1="12" y1="326.5" x2="20" y2="326.5" /><line x1="12" y1="335.5" x2="20" y2="335.5" /><line x1="12" y1="343.5" x2="20" y2="343.5" /><line x1="12" y1="351.5" x2="20" y2="351.5" /><line x1="0" y1="359.5" x2="20" y2="359.5"/><text transform="translate(4,361.0) rotate(90)" x="0" y="0" stroke="none">56</text><line x1="12" y1="367.5" x2="20" y2="367.5" /><line x1="12" y1="376.5" x2="20" y2="376.5" /><line x1="12" y1="384.5" x2="20" y2="384.5" /><line x1="12" y1="392.5" x2="20" y2="392.5" /><line x1="12" y1="400.5" x2="20" y2="400.5" /><line x1="12" y1="408.5" x2="20" y2="408.5" /><line x1="0" y1="416.5" x2="20" y2="416.5"/><text transform="translate(4,418.0) rotate(90)" x="0" y="0" stroke="none">70</text><line x1="12" y1="425.5" x2="20" y2="425.5" /><line x1="12" y1="433.5" x2="20" y2="433.5" /><line x1="12" y1="441.5" x2="20" y2="441.5" /><line x1="12" y1="449.5" x2="20" y2="449.5" /><line x1="12" y1="457.5" x2="20" y2="457.5" /><line x1="12" y1="466.5" x2="20" y2="466.5" /><line x1="0" y1="474.5" x2="20" y2="474.5"/><text transform="translate(4,476.0) rotate(90)" x="0" y="0" stroke="none">84</text><line x1="12" y1="482.5" x2="20" y2="482.5" /><line x1="12" y1="490.5" x2="20" y2="490.5" /><line x1="12" y1="498.5" x2="20" y2="498.5" /></svg>

<!-- canvas -->
<div class="a" style="left:56px;top:152px;width:549px;height:501px;background:#c0c0c0"></div>
<div class="a" style="left:136px;top:282px;width:369px;height:221px;background-color:#eeeeee;background-image:linear-gradient(90deg,transparent 1px,#fff 1px),linear-gradient(transparent 1px,#fff 1px);background-size:3px 3px;background-position:2px 2px"></div>
<div class="a" style="left:320px;top:152px;width:1px;height:501px;background:#00ecec"></div>
<div class="a" style="left:56px;top:393px;width:549px;height:1px;background:#00ecec"></div>

<!-- right panel -->
<div class="a" style="left:605px;top:131px;width:300px;height:522px;background:#f0f0f0"></div>

<div class="a" style="left:605px;top:131px;width:4px;height:521px;background:#fafafa"></div>
<!-- tabs -->
<div class="a" style="left:682px;top:135px;width:73px;height:23px;background:#f0f0f0;border:1px solid #dadada;border-bottom:none"></div>
<div class="a" style="left:754px;top:135px;width:74px;height:23px;background:#f0f0f0;border:1px solid #dadada;border-bottom:none"></div>
<div class="a" style="left:828px;top:135px;width:73px;height:23px;background:#f0f0f0;border:1px solid #dadada;border-bottom:none"></div>
<div class="a" style="left:605px;top:132px;width:78px;height:27px;background:#fcfcfc;border:1px solid #d9d9d9;border-bottom:none"></div>
<div class="a" style="left:608px;top:135px;width:73px;height:21px;border:1px dotted #000"></div>
<svg class="a" style="left:614px;top:136px" width="18" height="17">
<rect x="0.5" y="0.5" width="17" height="16" rx="2.5" fill="#555"/>
<g stroke="#a8a8a8" stroke-width="1"><line x1="4" y1="4.5" x2="14" y2="4.5"/><line x1="4" y1="6.5" x2="14" y2="6.5"/><line x1="4" y1="8.5" x2="14" y2="8.5"/><line x1="4" y1="10.5" x2="14" y2="10.5"/><line x1="4" y1="12.5" x2="14" y2="12.5"/></g>
<line x1="5.5" y1="3" x2="5.5" y2="14" stroke="#555" stroke-width="1"/>
</svg>
<div class="t" style="left:639px;top:137px;font-size:12px">属性栏</div>
<svg class="a" style="left:686px;top:136px" width="22" height="21" fill="none" stroke="#000" stroke-width="2.5">
<ellipse cx="11" cy="4.6" rx="9.2" ry="3.4"/>
<path d="M1.8 4.6 V15.4 A9.2 3.6 0 0 0 20.2 15.4 V4.6"/>
<path d="M1.8 10 A9.2 3.6 0 0 0 20.2 10"/>
</svg>
<div class="t" style="left:713px;top:140px">数据库</div>
<svg class="a" style="left:761px;top:136px" width="20" height="20">
<rect x="0" y="0" width="20" height="19.8" rx="2.2" fill="#000"/>
<rect x="2" y="3.8" width="16" height="14" fill="#f4f4f4"/>
<rect x="3.2" y="5.5" width="13.7" height="2" fill="#000"/>
<rect x="4.1" y="10.1" width="4.6" height="6.6" rx="0.8" fill="none" stroke="#000" stroke-width="1.8"/>
<rect x="11.8" y="10.1" width="5" height="6.6" rx="0.8" fill="none" stroke="#000" stroke-width="1.8"/>
</svg>
<div class="t" style="left:787px;top:140px">模板库</div>
<svg class="a" style="left:835px;top:136px" width="21" height="20" fill="#222">
<path d="M10.5 0 L20.5 6 H0.5 Z"/>
<circle cx="10.5" cy="3.8" r="1.3" fill="#f0f0f0"/>
<rect x="1.5" y="6.5" width="18" height="1.8"/>
<rect x="3" y="9" width="2.5" height="7.5"/><rect x="7.2" y="9" width="2.5" height="7.5"/><rect x="11.4" y="9" width="2.5" height="7.5"/><rect x="15.6" y="9" width="2.5" height="7.5"/>
<rect x="1" y="17" width="19" height="3"/>
</svg>
<div class="t" style="left:861px;top:140px">素材库</div>

<!-- content panel -->
<div class="a" style="left:609px;top:161px;width:292px;height:489px;border:1px solid #7b7b7b;border-right-color:#a0a0a0;background:#f0f0f0"></div>
<div class="a" style="left:901px;top:161px;width:4px;height:492px;background:#fafafa"></div>
<div class="a" style="left:605px;top:650px;width:300px;height:3px;background:#fafafa"></div>
<div class="a" style="left:615px;top:167px;width:280px;height:24px;background:#fff;border:1px solid #d0d0d0"></div>
<svg class="a" style="left:882px;top:178px" width="8" height="5"><path d="M0.5 0 H7.5 L4 4Z" fill="#000"/></svg>
<div class="a" style="left:610px;top:196px;width:290px;height:1px;background:#8a8a8a"></div>
<div class="t" style="left:621px;top:210px;font-size:15px;line-height:17px;font-weight:bold;letter-spacing:1.5px">页面背景属性：</div>
<div class="t" style="left:626px;top:243px">背景颜色：</div>
<div class="t" style="left:626px;top:275px">背景图片：</div>
<div class="btn" style="top:237px">背景颜色和透明度...</div>
<div class="a" style="left:860px;top:237px;width:26px;height:25px;background:#fff;border:1px solid #000"></div>
<div class="btn" style="top:269px">选择常用背景图片...</div>
<div class="btn" style="top:302px">选择其它背景图片...</div>
<div class="btn" style="top:335px;color:#8a8a8a">清空背景图片</div>
<div class="a" style="left:610px;top:431px;width:290px;height:1px;background:#8a8a8a"></div>
<div class="t" style="left:618px;top:445px">关联数据源：</div>
<div class="a" style="left:699px;top:442px;width:159px;height:19px;background:#fff;border:1px solid #d0d0d0"></div>
<div class="t" style="left:704px;top:445px">&lt;不关联数据源&gt;</div>
<svg class="a" style="left:845px;top:450px" width="8" height="5"><path d="M0.5 0 H7.5 L4 4Z" fill="#000"/></svg>
<div class="a" style="left:610px;top:469px;width:290px;height:22px;background:linear-gradient(#5a8ad8,#2a5bb8 50%,#0e3f9a)"></div>
<div class="t" style="left:614px;top:472px;color:#fff;font-weight:bold">缩览图</div>
<div class="a" style="left:610px;top:491px;width:290px;height:158px;background:#f0f0f0"></div>
<div class="a" style="left:637px;top:499px;width:237px;height:143px;background:#fff;border:1px dashed #000"></div>


<!-- status bar -->
<div class="a" style="left:1px;top:653px;width:904px;height:29px;background:linear-gradient(#d3d8dd,#e9ecef 50%,#f6f7f8)"></div>
<div class="t" style="left:7px;top:661px;letter-spacing:0.15px">神奇证卡证书打印软件 4.0</div>
<div class="sep" style="left:156px;top:659px;height:18px"></div>
<div class="t" style="left:165px;top:661px">缩放：35%</div>
<div class="sep" style="left:233px;top:659px;height:18px"></div>
<div class="t" style="left:242px;top:661px;letter-spacing:0.25px">页面尺寸：90.0 毫米 x 54.0 毫米, 300 像素/英寸</div>
<div class="sep" style="left:511px;top:659px;height:18px"></div>
<div class="t" style="left:521px;top:661px;letter-spacing:0.15px">鼠标位置：63.6 毫米，-5.0 毫米</div>

<div class="a" style="left:901px;top:670px;width:2px;height:2px;background:#a0a4a8"></div><div class="a" style="left:897px;top:674px;width:2px;height:2px;background:#a0a4a8"></div><div class="a" style="left:901px;top:674px;width:2px;height:2px;background:#a0a4a8"></div><div class="a" style="left:893px;top:678px;width:2px;height:2px;background:#a0a4a8"></div><div class="a" style="left:897px;top:678px;width:2px;height:2px;background:#a0a4a8"></div><div class="a" style="left:901px;top:678px;width:2px;height:2px;background:#a0a4a8"></div>
<!-- annotations -->
<div class="a" style="left:601px;top:118px;width:305px;height:55px;border:3px solid #ff1a1a;border-radius:4px"></div><div class="a" style="left:1px;top:320px;width:36px;height:220px;border:3px solid #ff1a1a;border-radius:4px"></div><div class="a" style="left:690px;top:429px;width:178px;height:41px;border:3px solid #ff1a1a;border-radius:4px"></div><div class="red" style="left:76px;top:204px">文本工具</div><div class="red" style="left:76px;top:236px">条形码</div><div class="red" style="left:75px;top:267px">二维码</div><div class="red" style="left:77px;top:300px">图片</div><div class="red" style="left:79px;top:340px">图形</div><div class="red" style="left:138px;top:546px">弧形文字</div><div class="red" style="left:140px;top:578px">五角星</div><div class="red" style="left:230px;top:170px">属性栏、数据库、模板库、素材库</div><div class="red" style="left:343px;top:7px">神奇证卡证书打印软件</div><div class="red" style="left:693px;top:399px">当前标签关联数据源</div><div class="red" style="left:190px;top:367px;font-size:32px;line-height:36px;-webkit-text-stroke:0.4px #ff1a1a">标签内容编辑区域</div><div class="red" style="left:699px;top:546px;font-size:34px;line-height:38px;-webkit-text-stroke:0.4px #ff1a1a">缩览图</div>
<svg class="a" style="left:27px;top:205px" width="42" height="16"><polygon points="1.90,8.30 13.80,1.10 11.50,6.30 40.20,8.20 40.20,10.00 11.50,11.60 14.10,14.70" fill="#ff1a1a"/></svg><svg class="a" style="left:29px;top:238px" width="41" height="16"><polygon points="1.60,8.50 13.50,1.50 11.00,6.00 39.20,7.80 39.20,9.50 11.00,11.20 13.50,14.80" fill="#ff1a1a"/></svg><svg class="a" style="left:31px;top:269px" width="38" height="15"><polygon points="1.40,7.30 12.40,1.10 10.00,5.00 36.00,7.20 36.00,9.00 10.00,10.20 12.40,13.60" fill="#ff1a1a"/></svg><svg class="a" style="left:31px;top:299px" width="42" height="18"><polygon points="1.90,7.70 14.70,1.80 11.50,5.50 40.20,10.20 40.00,12.20 11.00,10.60 13.30,16.00" fill="#ff1a1a"/></svg><svg class="a" style="left:42px;top:546px" width="90" height="19"><polygon points="1.00,9.40 15.80,1.20 11.50,5.00 88.80,9.80 88.80,11.80 11.50,13.60 14.80,17.80" fill="#ff1a1a"/></svg><svg class="a" style="left:39px;top:578px" width="92" height="19"><polygon points="1.80,9.40 16.40,1.40 14.00,4.60 90.00,9.20 90.00,11.20 14.00,13.80 16.40,17.30" fill="#ff1a1a"/></svg><svg class="a" style="left:40px;top:350px" width="35" height="36"><polygon points="1.60,34.60 5.60,17.00 7.20,22.00 32.00,1.60 33.40,2.90 13.80,27.40 18.50,28.70" fill="#ff1a1a"/></svg><svg class="a" style="left:555px;top:155px" width="41" height="22"><polygon points="39.80,3.40 23.20,1.70 26.00,4.60 1.60,19.30 2.40,20.70 29.00,12.40 29.60,16.60" fill="#ff1a1a"/></svg>
</body></html>
